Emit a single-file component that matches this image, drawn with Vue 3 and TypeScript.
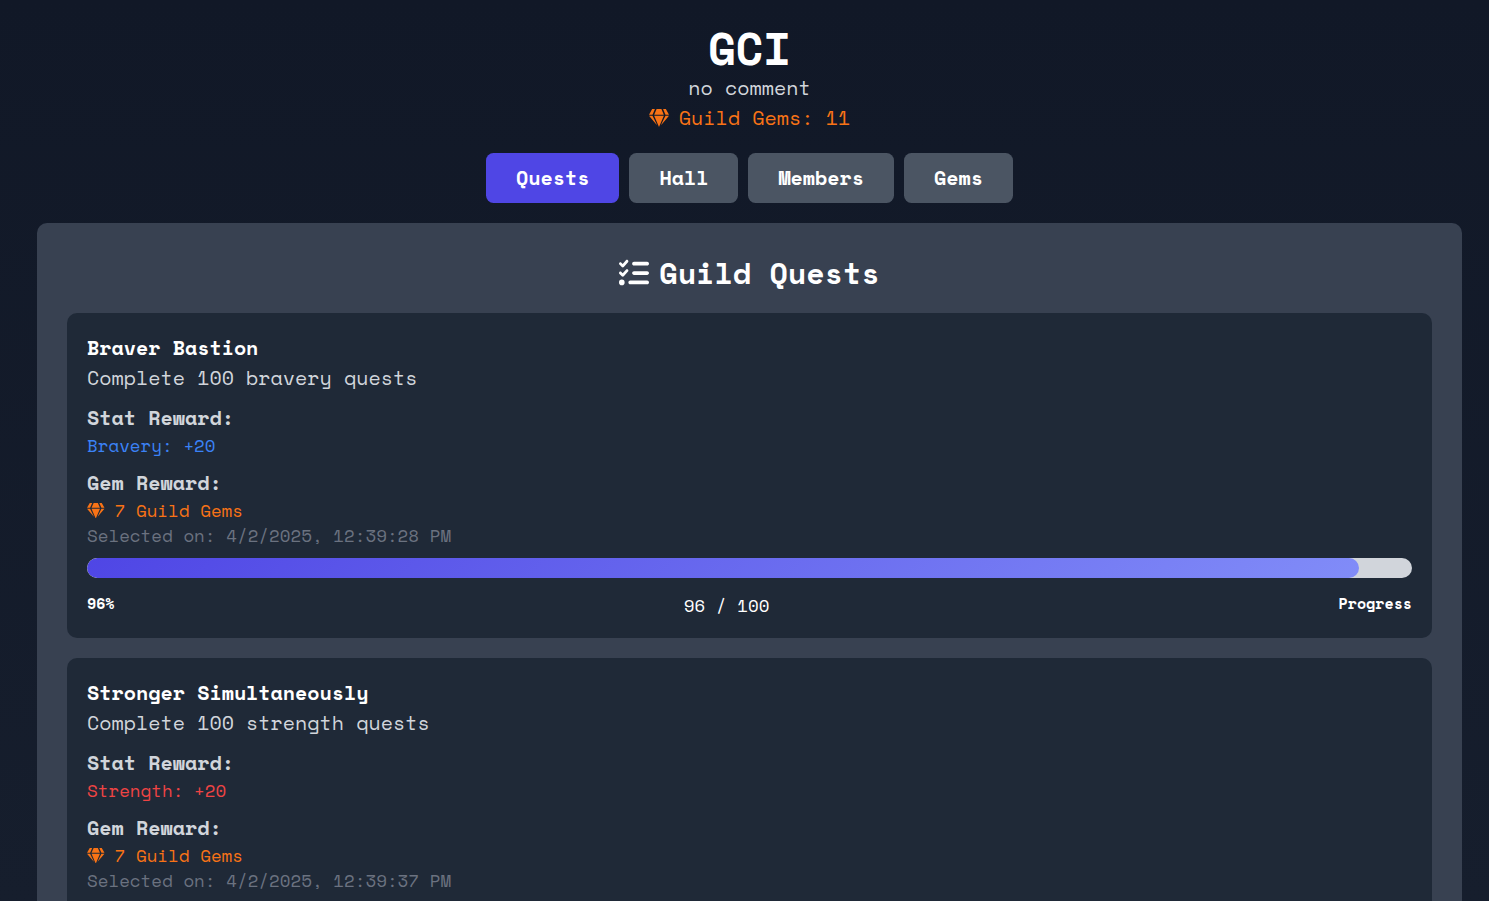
<script setup lang="ts">
interface Quest {
  title: string
  description: string
  stat: string
  statClass: string
  amount: number
  gems: number
  selected: string
  done: number
  goal: number
}

const tabs: string[] = ['Quests', 'Hall', 'Members', 'Gems']
const activeTab = 'Quests'

const quests: Quest[] = [
  { title: 'Braver Bastion', description: 'Complete 100 bravery quests', stat: 'Bravery', statClass: 'bravery', amount: 20, gems: 7, selected: '4/2/2025, 12:39:28 PM', done: 96, goal: 100 },
  { title: 'Stronger Simultaneously', description: 'Complete 100 strength quests', stat: 'Strength', statClass: 'strength', amount: 20, gems: 7, selected: '4/2/2025, 12:39:37 PM', done: 92, goal: 100 },
]

const gemPath = 'M485.5 0L576 160H474.9L405.7 0h79.8zm-128 0l69.2 160H149.3L218.5 0h139zm-267 0h79.8l-69.2 160H0L90.5 0zM0 192h100.7l123 251.7c1.5 3.1-2.7 5.9-5 3.3L0 192zm148.2 0h279.6l-137 318.2c-1 2.4-4.5 2.4-5.5 0L148.2 192zm204.1 251.7l123-251.7H576L357.3 446.9c-2.3 2.7-6.5-.1-5-3.2z'

const percent = (q: Quest): number => Math.round((q.done / q.goal) * 100)
</script>

<template>
  <div class="page">
    <div class="content">
      <header class="header">
        <h1 class="guild-name">GCI</h1>
        <p class="motto">no comment</p>
        <p class="guild-gems">
          <svg class="gem" viewBox="0 0 576 512"><path :d="gemPath" /></svg>
          <span>Guild Gems: 11</span>
        </p>
      </header>

      <nav class="tabs">
        <button v-for="t in tabs" :key="t" class="tab" :class="{ active: t === activeTab }">{{ t }}</button>
      </nav>

      <main class="panel">
        <h2 class="panel-title">
          <svg class="tasks" viewBox="0 0 512 512">
            <path d="M152.1 38.2c9.9 8.9 10.7 24 1.8 33.9l-72 80c-4.4 4.9-10.6 7.8-17.2 7.9s-12.9-2.4-17.6-7L7 113C-2.3 103.6-2.3 88.4 7 79s24.6-9.4 33.9 0l22.1 22.1 55.1-61.2c8.9-9.9 24-10.7 33.9-1.8zm0 160c9.9 8.9 10.7 24 1.8 33.9l-72 80c-4.4 4.9-10.6 7.8-17.2 7.9s-12.9-2.4-17.6-7L7 273c-9.4-9.4-9.4-24.6 0-33.9s24.6-9.4 33.9 0l22.1 22.1 55.1-61.2c8.9-9.9 24-10.7 33.9-1.8zM224 96c0-17.7 14.3-32 32-32H480c17.7 0 32 14.3 32 32s-14.3 32-32 32H256c-17.7 0-32-14.3-32-32zm0 160c0-17.7 14.3-32 32-32H480c17.7 0 32 14.3 32 32s-14.3 32-32 32H256c-17.7 0-32-14.3-32-32zM160 416c0-17.7 14.3-32 32-32H480c17.7 0 32 14.3 32 32s-14.3 32-32 32H192c-17.7 0-32-14.3-32-32zM48 368a48 48 0 1 1 0 96 48 48 0 1 1 0-96z" />
          </svg>
          <span>Guild Quests</span>
        </h2>

        <article v-for="q in quests" :key="q.title" class="card">
          <h3 class="quest-title">{{ q.title }}</h3>
          <p class="quest-desc">{{ q.description }}</p>
          <p class="label">Stat Reward:</p>
          <p class="small" :class="q.statClass">{{ q.stat }}: +{{ q.amount }}</p>
          <p class="label">Gem Reward:</p>
          <p class="small gem-reward">
            <svg class="gem" viewBox="0 0 576 512"><path :d="gemPath" /></svg>
            <span>{{ q.gems }} Guild Gems</span>
          </p>
          <p class="small selected">Selected on: {{ q.selected }}</p>
          <div class="track">
            <div class="fill" :style="{ width: percent(q) + '%' }"></div>
          </div>
          <div class="progress-row">
            <span class="tiny">{{ percent(q) }}%</span>
            <span class="count">{{ q.done }} / {{ q.goal }}</span>
            <span class="tiny">Progress</span>
          </div>
        </article>
      </main>
    </div>
  </div>
</template>

<style>
body {
  margin: 0;
  overflow: hidden;
}
</style>

<style scoped>
.page {
  box-sizing: border-box;
  height: 901px;
  overflow: hidden;
  padding: 23px 27px 0 37px;
  background: linear-gradient(to bottom, #111827, #161e2d);
  font-family: "Space Mono", "DejaVu Sans Mono", monospace;
  font-size: 20px;
  line-height: 30px;
  color: #fff;
}
h1, h2, h3, p {
  margin: 0;
}
svg {
  display: block;
  flex: none;
  fill: currentColor;
}
.header {
  display: flex;
  flex-direction: column;
  align-items: center;
}
.guild-name {
  font-size: 45px;
  line-height: 50px;
}
.motto {
  color: #d1d5db;
}
.guild-gems {
  display: flex;
  align-items: center;
  gap: 10px;
  color: #f97316;
}
.guild-gems .gem {
  width: 20px;
  height: 18px;
}
.tabs {
  display: flex;
  justify-content: center;
  gap: 10px;
  margin: 20px 0;
}
.tab {
  height: 50px;
  padding: 0 30px;
  border: 0;
  border-radius: 7.5px;
  background: #4b5563;
  color: #fff;
  font: inherit;
  font-weight: 700;
}
.tab.active {
  background: #4f46e5;
}
.panel {
  box-sizing: border-box;
  padding: 30px;
  border-radius: 10px;
  background: #384151;
}
.panel-title {
  display: flex;
  justify-content: center;
  align-items: center;
  gap: 10px;
  margin-bottom: 20px;
  font-size: 30px;
  line-height: 40px;
}
.tasks {
  width: 30px;
  height: 30px;
}
.card {
  margin-bottom: 20px;
  padding: 20px;
  border-radius: 10px;
  background: #1f2937;
}
.quest-title {
  font-size: 20px;
}
.quest-desc,
.label {
  color: #d1d5db;
}
.label {
  margin-top: 10px;
  font-weight: 700;
}
.small {
  font-size: 17.5px;
  line-height: 25px;
}
.bravery {
  color: #3b82f6;
}
.strength {
  color: #ef4444;
}
.gem-reward {
  display: flex;
  align-items: center;
  gap: 10px;
  color: #f97316;
}
.gem-reward .gem {
  width: 17.5px;
  height: 15.5px;
}
.selected {
  color: #6b7280;
}
.track {
  height: 20px;
  margin: 10px 0 15px;
  overflow: hidden;
  border-radius: 10px;
  background: #d1d5db;
}
.fill {
  height: 100%;
  border-radius: 10px;
  background: linear-gradient(135deg, #4f46e5, #818cf8);
}
.progress-row {
  display: flex;
  justify-content: space-between;
  align-items: flex-start;
}
.count {
  font-size: 17.5px;
  line-height: 25px;
}
.tiny {
  font-size: 15px;
  line-height: 20px;
  font-weight: 700;
}
</style>
